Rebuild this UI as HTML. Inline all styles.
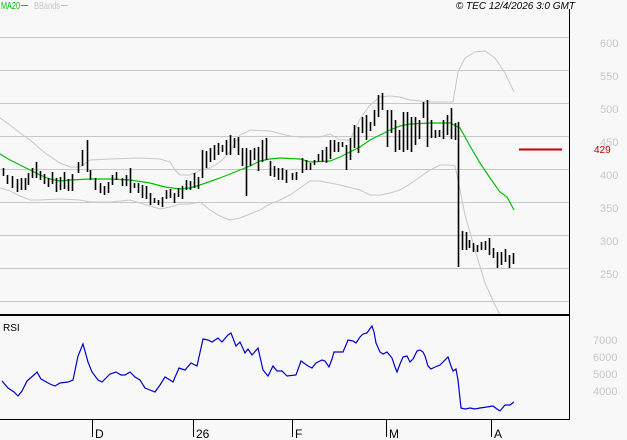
<!DOCTYPE html><html><head><style>body{margin:0;background:#f8f8f8;width:627px;height:440px;overflow:hidden;font-family:"Liberation Sans",sans-serif}</style></head><body>
<svg width="627" height="440" xmlns="http://www.w3.org/2000/svg" style="position:absolute;left:0;top:0">
<rect width="627" height="440" fill="#f8f8f8"/>
<g stroke="#c8c8c8" stroke-width="1">
<line x1="0" y1="37.5" x2="569" y2="37.5"/><line x1="0" y1="70.5" x2="569" y2="70.5"/><line x1="0" y1="103.5" x2="569" y2="103.5"/><line x1="0" y1="136.5" x2="569" y2="136.5"/><line x1="0" y1="169.5" x2="569" y2="169.5"/><line x1="0" y1="202.5" x2="569" y2="202.5"/><line x1="0" y1="235.5" x2="569" y2="235.5"/><line x1="0" y1="268.5" x2="569" y2="268.5"/><line x1="0" y1="301.5" x2="569" y2="301.5"/>
</g>
<g fill="none" stroke="#c8c8c8" stroke-width="1">
<polyline points="0,118 10,125 20,133 30,140 45,153 60,163 70,167 80,167 90,160 110,159 140,158 160,159 170,162 175,170 180,175 190,175 195,173 200,170 210,168 220,162 230,152 240,135 245,133 250,130 270,131 290,136 300,137 320,137 330,134 340,140 350,140 360,119 370,105 380,97 390,96 400,97 410,100 430,102 453,102 458,72 465,58 475,52 485,51 495,58 505,73 514,92"/>
<polyline points="0,188 10,191 20,196 30,200 40,200 60,199 80,200 90,202 110,202 130,200 140,203 150,206 160,209 170,207 180,204 190,204 200,202 210,210 220,216 230,220 240,218 250,214 260,210 270,204 280,200 290,195 300,188 310,181 320,181 340,185 360,190 370,195 380,195 390,193 400,190 410,184 420,177 430,170 440,165 450,165 455,166 458,180 465,215 475,250 485,283 495,305 500,315"/>
</g>
<polyline fill="none" stroke="#00c000" stroke-width="1.2" points="0,154 10,160 20,165 30,170 40,175 50,179 60,181 70,180 90,179 110,179 130,180 150,183 165,187 180,189 190,188 200,185 220,178 240,170 250,166 260,161 270,159 280,158 300,159 310,162 330,161 340,157 350,152 360,147 370,140 380,135 390,130 400,126 410,124 430,123 450,123 460,128 470,146 480,163 490,178 500,192 507,197 514,210"/>
<path transform="translate(0.5,0)" stroke="#000" stroke-width="1.6" fill="none" d="M3,168V176M7,175V184M12,176V188M17,179V192M21,178V190M25,178V190M28,173V185M32,168V178M36,162V178M40,171V180M44,174V184M48,178V187M52,172V184M56,178V192M60,177V190M64,172V189M68,179V191M72,174V191M78,162V173M82,150V166M87,140V172M90,170V180M95,178V190M100,183V193M104,186V195M108,182V193M112,175V185M116,172V180M122,178V186M126,175V186M130,168V193M134,183V188M138,183V193M142,185V198M146,186V199M150,193V205M154,198V203M158,200V205M162,197V207M166,190V199M170,189V198M174,193V203M178,188V197M182,186V199M186,180V190M190,181V190M194,173V188M198,177V189M202,150V178M206,151V168M210,148V162M214,145V160M218,143V155M222,145V152M226,140V155M230,135V155M234,138V148M238,137V155M242,148V166M246,148V196M250,150V166M254,148V160M258,147V171M262,140V162M266,138V160M270,161V176M274,166V177M278,168V180M282,168V180M286,170V183M292,173V180M296,172V180M302,158V173M306,160V170M310,163V170M314,160V165M318,154V162M322,150V162M326,147V163M330,140V159M334,140V152M338,142V152M342,142V147M346,145V170M350,138V160M354,125V148M358,127V153M362,117V133M366,115V140M370,122V131M374,110V126M378,95V117M382,93V110M387,110V147M391,110V133M395,120V152M399,130V150M403,112V152M407,112V150M411,117V152M415,117V145M419,120V139M423,102V118M427,100V147M431,120V138M435,130V138M439,130V137M443,120V139M447,115V135M451,108V139M455,123V140M458,122V267M462,231V250M466,232V250M469,240V248M473,243V252M477,245V252M481,242V250M485,241V250M489,238V255M493,248V258M497,252V268M501,252V265M505,249V262M509,255V268M513,253V264"/>
<line x1="519" y1="149.5" x2="562" y2="149.5" stroke="#c00000" stroke-width="2"/>
<text x="594" y="153" font-size="10" fill="#c00000">429</text>
<line x1="569.5" y1="9" x2="569.5" y2="420" stroke="#000"/>
<line x1="0" y1="315" x2="570" y2="315" stroke="#000" stroke-width="2"/>
<line x1="0" y1="419.5" x2="570" y2="419.5" stroke="#000"/>
<g stroke="#000"><line x1="92.5" y1="419" x2="92.5" y2="437"/><line x1="193.5" y1="419" x2="193.5" y2="437"/><line x1="292.5" y1="419" x2="292.5" y2="437"/><line x1="386.5" y1="419" x2="386.5" y2="437"/><line x1="491.5" y1="419" x2="491.5" y2="437"/></g>
<g font-size="12" fill="#000"><text x="95" y="438">D</text><text x="196" y="438">26</text><text x="295" y="438">F</text><text x="389" y="438">M</text><text x="494" y="438">A</text></g>
<polyline fill="none" stroke="#0000d0" stroke-width="1.2" points="2,381 8,388 14,392 18,396 22,391 27,381 35,374 37,372 41,379 50,384 55,386 60,383 68,382 73,380 78,356 83,344 88,362 92,372 98,380 102,382 106,378 110,374 116,372 121,375 125,375 130,372 135,377 140,380 145,388 150,390 155,392 160,385 165,377 170,380 173,382 179,368 185,370 191,363 197,366 203,339 208,340 212,342 218,338 222,342 228,335 231,333 236,346 240,342 245,353 248,349 252,355 258,348 263,370 268,376 273,366 277,371 282,371 287,376 296,375 301,361 308,366 312,368 316,363 322,360 325,361 329,367 332,359 334,352 343,352 346,345 348,340 353,341 356,343 360,337 363,334 367,333 369,330 372,326 374,332 376,343 380,352 383,354 387,352 392,358 395,367 397,372 400,364 403,357 407,356 410,362 413,359 417,351 420,350 423,352 425,356 428,366 431,369 435,367 440,365 448,357 451,366 453,371 456,369 458,380 461,408 465,409 470,408 475,409 480,408 487,407 493,406 497,409 500,411 505,405 510,405 514,402"/>
<text x="3" y="331" font-size="10" fill="#000">RSI</text>
<g font-size="11" fill="#c8c8c8"><text x="600" y="47">600</text><text x="600" y="80">550</text><text x="600" y="113">500</text><text x="600" y="146">450</text><text x="600" y="179">400</text><text x="600" y="212">350</text><text x="600" y="245">300</text><text x="600" y="278">250</text>
<text x="593" y="344">7000</text><text x="593" y="361">6000</text><text x="593" y="378">5000</text><text x="593" y="395">4000</text></g>
<text x="1" y="9" font-size="10" fill="#00c000" textLength="19" lengthAdjust="spacingAndGlyphs">MA20</text>
<line x1="21" y1="5.5" x2="28" y2="5.5" stroke="#00c000"/>
<text x="34" y="9" font-size="10" fill="#c8c8c8" textLength="26" lengthAdjust="spacingAndGlyphs">BBands</text>
<line x1="61" y1="5.5" x2="68" y2="5.5" stroke="#c8c8c8"/>
<text x="575" y="9" font-size="10" font-style="italic" fill="#000" text-anchor="end">© TEC 12/4/2026 3:0 GMT</text>
</svg>
</body></html>
